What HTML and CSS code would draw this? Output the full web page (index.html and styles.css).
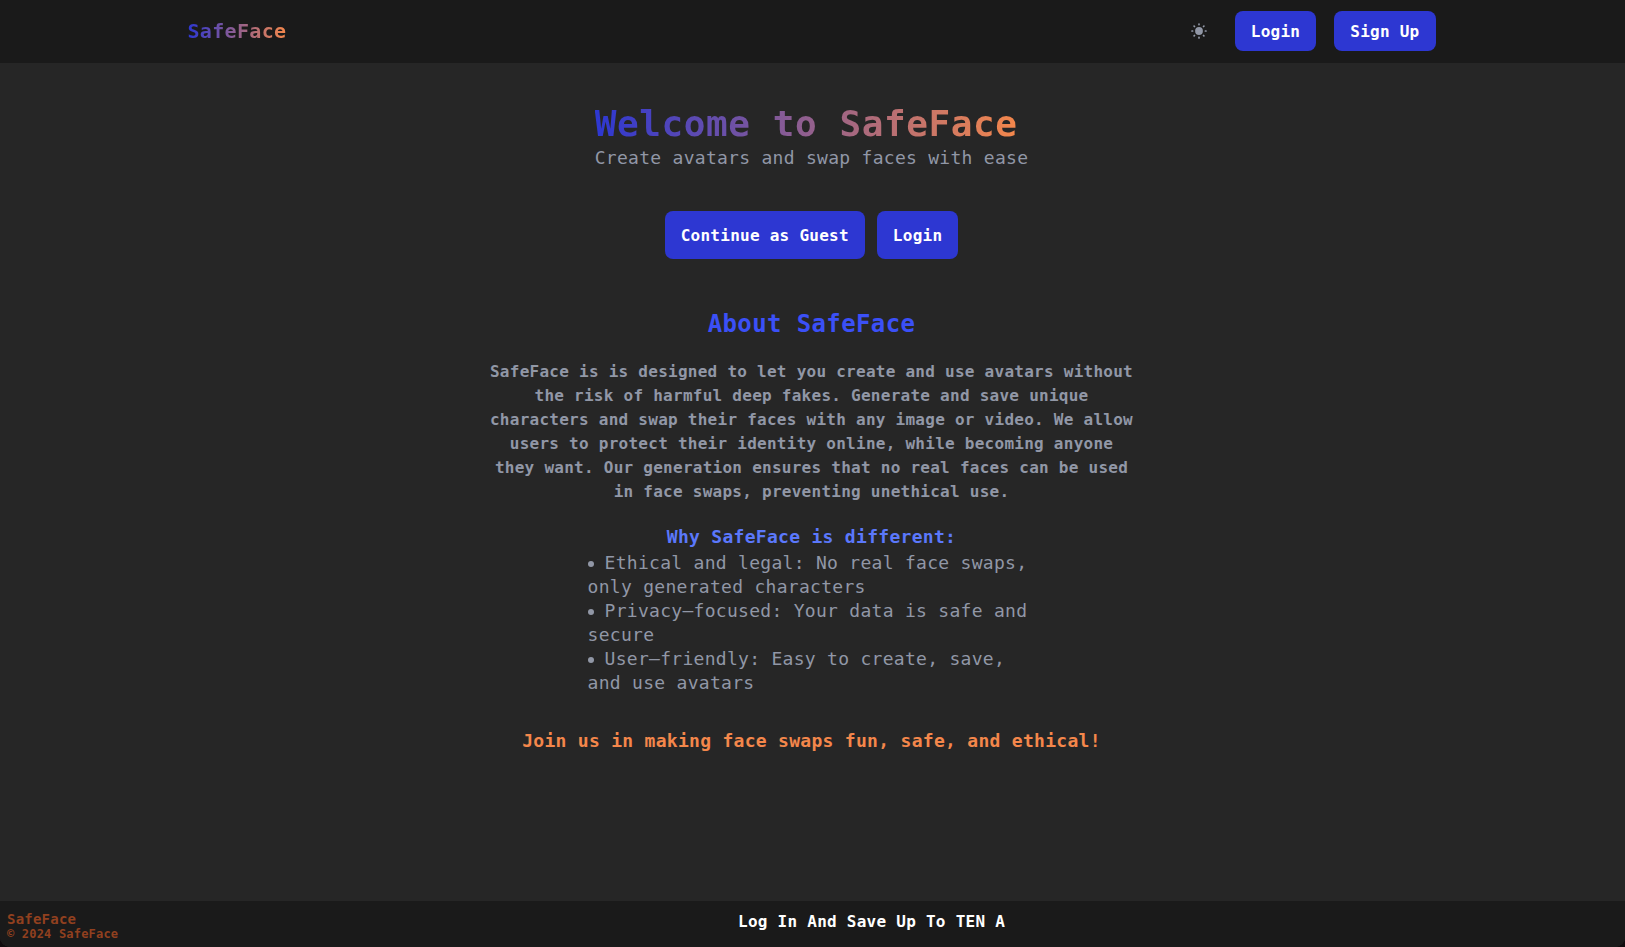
FILE: index.html
```
<!DOCTYPE html>
<html lang="en">
<head>
    <meta charset="UTF-8">
    <title>SafeFace</title>
    <link rel="stylesheet" href="styles.css">
</head>
<body>
    <header class="navbar">
        <div class="navbar-inner">
            <a class="logo">SafeFace</a>
            <nav class="nav-actions">
                <button class="theme-toggle" aria-label="Toggle theme">
                    <svg width="16" height="16" viewBox="0 0 16 16" fill="currentColor">
                        <circle cx="8" cy="8" r="3.9"/>
                        <path d="M8 1v.6M8 14.4v.6M1 8h.6M14.4 8h.6M3.1 3.1l.4.4M12.5 12.5l.4.4M3.1 12.9l.4-.4M12.5 3.5l.4-.4" stroke="currentColor" stroke-width="1.7" stroke-linecap="round"/>
                    </svg>
                </button>
                <button class="btn">Login</button>
                <button class="btn">Sign Up</button>
            </nav>
        </div>
    </header>

    <main class="content">
        <section class="hero">
            <h1 class="hero-title">Welcome to SafeFace</h1>
            <p class="hero-subtitle">Create avatars and swap faces with ease</p>
        </section>

        <div class="hero-actions">
            <button class="btn btn-large">Continue as Guest</button>
            <button class="btn btn-large">Login</button>
        </div>

        <section class="about">
            <h2 class="about-title">About SafeFace</h2>
            <p class="about-text">SafeFace is is designed to let you create and use avatars without the risk of harmful deep fakes. Generate and save unique characters and swap their faces with any image or video. We allow users to protect their identity online, while becoming anyone they want. Our generation ensures that no real faces can be used in face swaps, preventing unethical use.</p>
            <h3 class="why-title">Why SafeFace is different:</h3>
            <ul class="why-list">
                <li>Ethical and legal: No real face swaps, only generated characters</li>
                <li>Privacy–focused: Your data is safe and secure</li>
                <li>User–friendly: Easy to create, save, and use avatars</li>
            </ul>
            <p class="join">Join us in making face swaps fun, safe, and ethical!</p>
        </section>
    </main>

    <footer class="footer">
        <div class="footer-brand">
            <p class="footer-name">SafeFace</p>
            <p class="footer-copy">© 2024 SafeFace</p>
        </div>
        <p class="footer-promo">Log In And Save Up To TEN A</p>
    </footer>
</body>
</html>
```
FILE: styles.css
```
* {
    margin: 0;
    padding: 0;
    box-sizing: border-box;
    font-family: "DejaVu Sans Mono", monospace;
}

html {
    background-color: #100c0e;
}

body {
    display: flex;
    flex-direction: column;
    height: 100vh;
    overflow: hidden;
    background-color: #262626;
    color: #9197a6;
    border-radius: 0 0 10px 10px;
}

/* Top bar */
.navbar {
    height: 63px;
    padding-right: 2px;
    background-color: #1a1a1a;
}

.navbar-inner {
    display: flex;
    align-items: center;
    justify-content: space-between;
    width: 1280px;
    height: 62px;
    margin: 0 auto;
    padding: 0 16px;
}

.logo,
.hero-title {
    background: linear-gradient(to right, #2d37d2, #f4874b);
    -webkit-background-clip: text;
    background-clip: text;
    color: transparent;
    font-weight: bold;
}

.logo {
    font-size: 20px;
    letter-spacing: 0.33px;
}

.nav-actions {
    display: flex;
    align-items: center;
    gap: 18px;
}

.theme-toggle {
    display: flex;
    margin-right: 10px;
    border: none;
    background: none;
    color: #9197a6;
}

.btn {
    height: 40px;
    padding: 0 16px;
    border: none;
    border-radius: 8px;
    background-color: #2d37d2;
    color: #fff;
    font-size: 16px;
    font-weight: bold;
    letter-spacing: 0.26px;
    cursor: pointer;
}

.btn-large {
    height: 48px;
}

/* Page content */
.content {
    display: flex;
    flex: 1;
    flex-direction: column;
    align-items: center;
    padding: 41px 2px 0 0;
}

.hero-title {
    width: fit-content;
    font-size: 36px;
    line-height: 40px;
    letter-spacing: 0.58px;
}

.hero-subtitle {
    font-size: 18px;
    line-height: 27px;
    letter-spacing: 0.28px;
}

.hero-actions {
    display: flex;
    gap: 12px;
    margin-top: 40px;
}

/* About section */
.about {
    display: flex;
    flex-direction: column;
    align-items: center;
    width: 672px;
    margin-top: 49px;
}

.about-title {
    color: #3b50f7;
    font-size: 24px;
    line-height: 32px;
    letter-spacing: 0.38px;
}

.about-text {
    width: 648px;
    margin-top: 20px;
    font-size: 16px;
    font-weight: bold;
    line-height: 24px;
    letter-spacing: 0.26px;
    text-align: center;
}

.why-title {
    margin-top: 19px;
    color: #5b78fb;
    font-size: 18px;
    line-height: 28px;
    letter-spacing: 0.29px;
}

.why-list {
    width: 448px;
    list-style: none;
    font-size: 18px;
    line-height: 24px;
    letter-spacing: 0.29px;
}

.why-list li::before {
    content: "";
    display: inline-block;
    width: 6px;
    height: 6px;
    margin-right: 11px;
    border-radius: 50%;
    background-color: #9197a6;
    vertical-align: 2px;
}

.join {
    margin-top: 32px;
    color: #f4874b;
    font-size: 18px;
    font-weight: bold;
    line-height: 28px;
    letter-spacing: 0.29px;
}

/* Bottom bar */
.footer {
    display: grid;
    grid-template-columns: 731px 1fr;
    height: 46px;
    padding: 10px 7px 0;
    background-color: #1a1a1a;
    font-weight: bold;
}

.footer-brand {
    color: #91401f;
}

.footer-name {
    font-size: 14px;
    line-height: 16px;
    letter-spacing: 0.22px;
}

.footer-copy {
    font-size: 12px;
    line-height: 14px;
    letter-spacing: 0.19px;
}

.footer-promo {
    color: #fff;
    font-size: 16px;
    line-height: 22px;
    letter-spacing: 0.26px;
}
```
